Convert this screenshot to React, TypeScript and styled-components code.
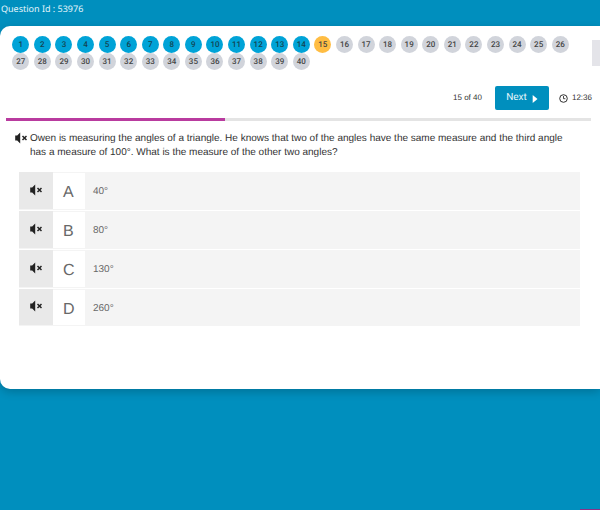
import React from "react";
import styled, { createGlobalStyle } from "styled-components";

const GlobalStyle = createGlobalStyle`
  *, *::before, *::after { box-sizing: border-box; }
  body {
    margin: 0;
    background: #008fbe;
    font-family: "Liberation Sans", Arial, sans-serif;
    text-rendering: geometricPrecision;
    overflow: hidden;
  }
  button { font: inherit; text-rendering: inherit; border: 0; padding: 0; background: none; cursor: pointer; }
`;

const Page = styled.div`
  display: flex;
  flex-direction: column;
  min-height: 100vh;
`;

const Header = styled.header`
  height: 26px;
  padding: 2px 1px 0;
  color: #e4f5fb;
  font: 9px/14px "Noto Sans", sans-serif;
`;

const Card = styled.main`
  min-height: 363px;
  padding-top: 10px;
  background: #fff;
  border-radius: 10px 0 0 10px;
  box-shadow: 0 3px 10px rgba(0, 0, 0, 0.2);
`;

const Top = styled.div`
  display: flex;
  align-items: flex-start;
`;

const Numbers = styled.nav`
  flex: 1;
  display: grid;
  grid-template-columns: repeat(26, 1fr);
  justify-items: center;
  padding: 0 21px 0 10px;
`;

type Status = "done" | "current" | "todo";
const statusColor: Record<Status, string> = {
  done: "#00a3d7",
  current: "#ffbd43",
  todo: "#d1d4db",
};

const NumberButton = styled.button<{ $status: Status }>`
  && {
    width: 17px;
    height: 17px;
    border-radius: 50%;
    background: ${(p) => statusColor[p.$status]};
    color: ${(p) => (p.$status === "done" ? "#134352" : "#444")};
    font: 500 8px/17px Roboto, sans-serif;
    text-align: center;
  }
`;

const SideTab = styled.button`
  && {
    width: 8px;
    height: 26px;
    margin-top: 4px;
    background: #e4e4e9;
  }
`;

const Toolbar = styled.div`
  display: flex;
  align-items: center;
  justify-content: flex-end;
  height: 24px;
  margin-top: 16px;
  padding-right: 8px;
  font-size: 8px;
  line-height: 12px;
  color: #333;
`;

const NextButton = styled.button`
  && {
    display: flex;
    align-items: center;
    justify-content: center;
    gap: 5px;
    width: 54px;
    height: 24px;
    margin: 0 10px 0 13px;
    border-radius: 2px;
    background: #008fbe;
    color: #e8f7fc;
    font: 10px/14px Roboto, sans-serif;
  }
`;

const ButtonArrow = styled.svg`
  margin-top: 2px;
`;

const Timer = styled.time`
  display: flex;
  align-items: center;
  gap: 4px;
`;

const Track = styled.div`
  height: 3px;
  margin: 8px 9px 0 6px;
  background: #e4e4e4;
`;

const Bar = styled.div`
  height: 3px;
  background: #b93b9f;
`;

const Question = styled.section`
  display: flex;
  align-items: flex-start;
  gap: 3px;
  padding: 11px 20px 0 15px;
  color: #333;
`;

const QuestionText = styled.p`
  margin: 0;
  font-size: 10px;
  line-height: 14px;
`;

const SoundButton = styled.button`
  display: flex;
  color: #222;
`;

const Options = styled.ul`
  display: grid;
  gap: 1px;
  margin: 12px 20px 0 19px;
  padding: 0;
  list-style: none;
`;

const Option = styled.li`
  display: grid;
  grid-template: 100% / 34px 1fr;
  height: 38px;
  background: #f4f4f4;

  &:last-child {
    height: 37px;
  }
`;

const SpeakCell = styled.button`
  && {
    display: flex;
    align-items: center;
    justify-content: center;
    margin: 0 0 1px;
    padding: 0 1px 2px 0;
    background: #e9e9e9;
    color: #222;
  }
`;

const Choice = styled.button`
  && {
    display: grid;
    grid-template: 100% / 32px 1fr;
    padding: 1px 0;
    color: #686868;
    text-align: left;
  }
`;

const Letter = styled.span`
  padding-left: 10px;
  background: #fff;
  font-size: 16px;
  line-height: 40px;
`;

const Answer = styled.span`
  padding-left: 8px;
  font-size: 10px;
  line-height: 38px;
`;

const CornerMark = styled.div`
  align-self: flex-end;
  width: 20px;
  height: 1px;
  margin-top: auto;
  background: #8b3187;
`;

const Muted = () => (
  <svg width="12" height="12" viewBox="0 0 12 12" aria-hidden="true">
    <path d="M0.2 3.5h2L5.2 0.5v11L2.2 8.5h-2z" fill="currentColor" />
    <path d="M7.5 4l4 4M11.5 4l-4 4" stroke="currentColor" strokeWidth="1.5" fill="none" />
  </svg>
);

const Clock = () => (
  <svg width="9" height="9" viewBox="0 0 9 9" fill="none" stroke="#333" aria-hidden="true">
    <circle cx="4.5" cy="4.5" r="3.8" />
    <path d="M4.5 2v2.7h1.9" strokeWidth="0.9" />
  </svg>
);

const Arrow = () => (
  <ButtonArrow width="6" height="8" viewBox="0 0 6 8" fill="#fff" aria-hidden="true">
    <path d="M0.7 0L5.5 4L0.7 8z" />
  </ButtonArrow>
);

const TOTAL = 40;
const CURRENT = 15;
const numbers = Array.from({ length: TOTAL }, (_, i) => i + 1);
const options = [
  ["A", "40°"],
  ["B", "80°"],
  ["C", "130°"],
  ["D", "260°"],
];
const statusOf = (n: number): Status =>
  n < CURRENT ? "done" : n === CURRENT ? "current" : "todo";

export default function App() {
  return (
    <Page>
      <GlobalStyle />
      <Header>Question Id : 53976</Header>
      <Card>
        <Top>
          <Numbers aria-label="Questions">
            {numbers.map((n) => (
              <NumberButton key={n} $status={statusOf(n)}>{n}</NumberButton>
            ))}
          </Numbers>
          <SideTab aria-label="Open panel" />
        </Top>
        <Toolbar>
          <span>{CURRENT} of {TOTAL}</span>
          <NextButton>Next<Arrow /></NextButton>
          <Timer><Clock />12:36</Timer>
        </Toolbar>
        <Track role="progressbar" aria-label="Progress" aria-valuemax={TOTAL} aria-valuenow={CURRENT}>
          <Bar style={{ width: `${(CURRENT / TOTAL) * 100}%` }} />
        </Track>
        <Question>
          <SoundButton aria-label="Read question"><Muted /></SoundButton>
          <QuestionText>
            Owen is measuring the angles of a triangle. He knows that two of the angles have the same measure and the third angle has a measure of 100°. What is the measure of the other two angles?
          </QuestionText>
        </Question>
        <Options>
          {options.map(([letter, text]) => (
            <Option key={letter}>
              <SpeakCell aria-label={`Read option ${letter}`}><Muted /></SpeakCell>
              <Choice><Letter>{letter}</Letter><Answer>{text}</Answer></Choice>
            </Option>
          ))}
        </Options>
      </Card>
      <CornerMark />
    </Page>
  );
}
